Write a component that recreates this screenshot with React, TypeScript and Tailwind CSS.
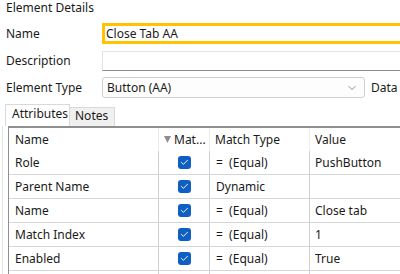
import { ChevronDown, Check } from 'lucide-react';

const rows = [
  { name: 'Role', match: true, type: '=  (Equal)', value: 'PushButton' },
  { name: 'Parent Name', match: true, type: 'Dynamic', value: '' },
  { name: 'Name', match: true, type: '=  (Equal)', value: 'Close tab' },
  { name: 'Match Index', match: true, type: '=  (Equal)', value: '1' },
  { name: 'Enabled', match: true, type: '=  (Equal)', value: 'True' },
  { name: '', match: false, type: '', value: '' },
];

function Checkbox() {
  return (
    <div className="w-[13px] h-[13px] rounded-[3px] bg-[#0f5fc2] flex items-center justify-center">
      <Check className="w-[9px] h-[9px] text-white" strokeWidth={2.5} />
    </div>
  );
}

export default function App() {
  return (
    <div className="w-[400px] h-[274px] overflow-hidden bg-white text-[12px] leading-[16px] text-[#1a1a1a] font-['Noto_Sans',sans-serif] flex flex-col">
      {/* Details form */}
      <div className="pl-[6px] h-[16px]">Element Details</div>

      <div className="mt-[7px] flex items-center h-[21px]">
        <span className="w-[102px] pl-[6px] shrink-0">Name</span>
        <div className="w-[320px] shrink-0 h-[21px] border-[3px] border-[#ffc300] bg-white flex items-center pl-[1px]">
          Close Tab AA
        </div>
      </div>

      <div className="mt-[7px] flex items-center h-[20px]">
        <span className="w-[102px] pl-[6px] shrink-0">Description</span>
        <div className="w-[320px] shrink-0 h-[20px] border border-[#e3e3e3] border-b-[#8c8c8c] bg-white" />
      </div>

      <div className="mt-[6px] flex items-center h-[21px]">
        <span className="w-[102px] pl-[6px] shrink-0">Element Type</span>
        <div className="w-[263px] shrink-0 h-[21px] border border-[#cfcfcf] rounded-[3px] bg-[#fdfdfd] flex items-center pl-[4px] pr-[6px]">
          <span className="flex-1">Button (AA)</span>
          <ChevronDown className="w-[12px] h-[12px] text-[#666]" strokeWidth={1.5} />
        </div>
        <span className="ml-[6px] shrink-0 whitespace-nowrap">Data Type</span>
      </div>

      {/* Tabs */}
      <div className="mt-[6px] flex items-end pl-[5px] h-[22px]">
        <div className="w-[65px] h-[22px] bg-white border border-b-0 border-[#d9d9d9] pl-[6px] pt-[1px]">Attributes</div>
        <div className="w-[45px] h-[19px] bg-[#f0f0f0] border border-l-0 border-b-0 border-[#d9d9d9] pl-[5px]">Notes</div>
      </div>

      {/* Attributes grid */}
      <div className="flex-1 flex border-l border-[#e3e3e3] ml-[2px]">
        <div className="ml-[5px] flex-1 border-t-2 border-l border-[#8f8f8f] overflow-hidden">
          <div className="flex h-[23px] items-center">
            <div className="w-[150px] shrink-0 h-full flex items-center pl-[6px] border-r border-[#ececec]">Name</div>
            <div className="w-[51px] shrink-0 h-full flex items-center pl-[5px] gap-[3px] border-r border-[#ececec]">
              <svg width="7" height="7" viewBox="0 0 7 7"><polygon points="0,0 7,0 3.5,7" fill="#8d8d8d" /></svg>
              <span>Mat...</span>
            </div>
            <div className="w-[100px] shrink-0 h-full flex items-center pl-[5px] border-r border-[#ececec]">Match Type</div>
            <div className="flex-1 h-full flex items-center pl-[5px]">Value</div>
          </div>
          {rows.map((r, i) => (
            <div key={i} className="flex h-[24px] border-b border-[#d6d6d6]">
              <div className="w-[150px] shrink-0 flex items-center pl-[6px] border-r border-[#cfcfcf]">{r.name}</div>
              <div className="w-[51px] shrink-0 flex items-center justify-center border-r border-[#cfcfcf]">
                {r.match && <Checkbox />}
              </div>
              <div className="w-[100px] shrink-0 flex items-center pl-[6px] border-r border-[#cfcfcf] whitespace-pre">{r.type}</div>
              <div className="flex-1 flex items-center pl-[5px]">{r.value}</div>
            </div>
          ))}
        </div>
      </div>
    </div>
  );
}
